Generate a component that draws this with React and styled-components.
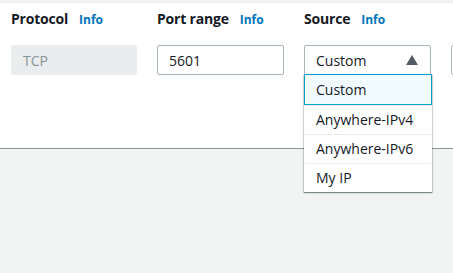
import styled, { createGlobalStyle } from "styled-components";

const Global = createGlobalStyle`
  html, body {
    margin: 0;
    padding: 0;
    background: #f2f3f3;
    font-family: "Open Sans", "Noto Sans", sans-serif;
    color: #16191f;
  }
`;

const Page = styled.div`
  width: 453px;
  height: 273px;
  display: flex;
  flex-direction: column;
  overflow: hidden;
`;

const Panel = styled.div`
  background: #fff;
  margin-top: 2px;
  border-top: 1px solid #eaeded;
  height: 147px;
  border-bottom: 1px solid #879596;
  padding: 6px 0 0 11px;
  box-sizing: border-box;
`;

const Footer = styled.div`
  flex: 1;
  background: #f2f3f3;
`;

const Row = styled.div`
  display: grid;
  grid-template-columns: 126px 127px 127px 127px;
  column-gap: 20px;
`;

const Field = styled.div`
  display: flex;
  flex-direction: column;
  gap: 15px;
`;

const LabelLine = styled.div`
  display: flex;
  align-items: baseline;
  gap: 11px;
  height: 21px;
`;

const Label = styled.span`
  font-size: 14px;
  font-weight: 700;
  color: #16191f;
  letter-spacing: -0.2px;
`;

const Info = styled.a`
  font-size: 12px;
  font-weight: 700;
  color: #0073bb;
  text-decoration: none;
`;

const Box = styled.div`
  position: relative;
  height: 30px;
  box-sizing: border-box;
  border: 1px solid ${(p) => (p.$disabled ? "#eaeded" : "#aab7b8")};
  background: ${(p) => (p.$disabled ? "#eaeded" : "#fff")};
  color: ${(p) => (p.$disabled ? "#879596" : "#16191f")};
  border-radius: 2px;
  font-size: 14px;
  display: flex;
  align-items: center;
  justify-content: space-between;
  padding: 0 12px 0 11px;
`;

const Caret = styled.svg`
  width: 12px;
  height: 10px;
  fill: #545b64;
`;

const Menu = styled.ul`
  position: absolute;
  top: 28px;
  left: -1px;
  width: 128px;
  margin: 0;
  padding: 0;
  list-style: none;
  background: #fff;
  box-shadow: 0 1px 1px rgba(0, 28, 36, 0.3), 1px 1px 1px rgba(0, 28, 36, 0.15),
    -1px 1px 1px rgba(0, 28, 36, 0.15);
  z-index: 5;
`;

const Option = styled.li`
  height: 29px;
  box-sizing: border-box;
  display: flex;
  align-items: center;
  padding: 0 11px;
  font-size: 14px;
  color: #16191f;
  border: 1px solid ${(p) => (p.$active ? "#00a1c9" : "transparent")};
  border-top-color: ${(p) => (p.$active ? "#00a1c9" : "#eaeded")};
  background: ${(p) => (p.$active ? "#f1faff" : "#fff")};
  &:first-child {
    height: 31px;
  }
`;

const options = ["Custom", "Anywhere-IPv4", "Anywhere-IPv6", "My IP"];

export default function App() {
  return (
    <Page>
      <Global />
      <Panel>
        <Row>
          <Field>
            <LabelLine>
              <Label>Protocol</Label>
              <Info>Info</Info>
            </LabelLine>
            <Box $disabled>TCP</Box>
          </Field>
          <Field>
            <LabelLine>
              <Label>Port range</Label>
              <Info>Info</Info>
            </LabelLine>
            <Box>5601</Box>
          </Field>
          <Field>
            <LabelLine>
              <Label>Source</Label>
              <Info>Info</Info>
            </LabelLine>
            <Box>
              Custom
              <Caret viewBox="0 0 12 10">
                <path d="M6 0 L12 10 L0 10 Z" />
              </Caret>
              <Menu>
                {options.map((o, i) => (
                  <Option key={o} $active={i === 0}>
                    {o}
                  </Option>
                ))}
              </Menu>
            </Box>
          </Field>
          <Field>
            <LabelLine />
            <Box />
          </Field>
        </Row>
      </Panel>
      <Footer />
    </Page>
  );
}
